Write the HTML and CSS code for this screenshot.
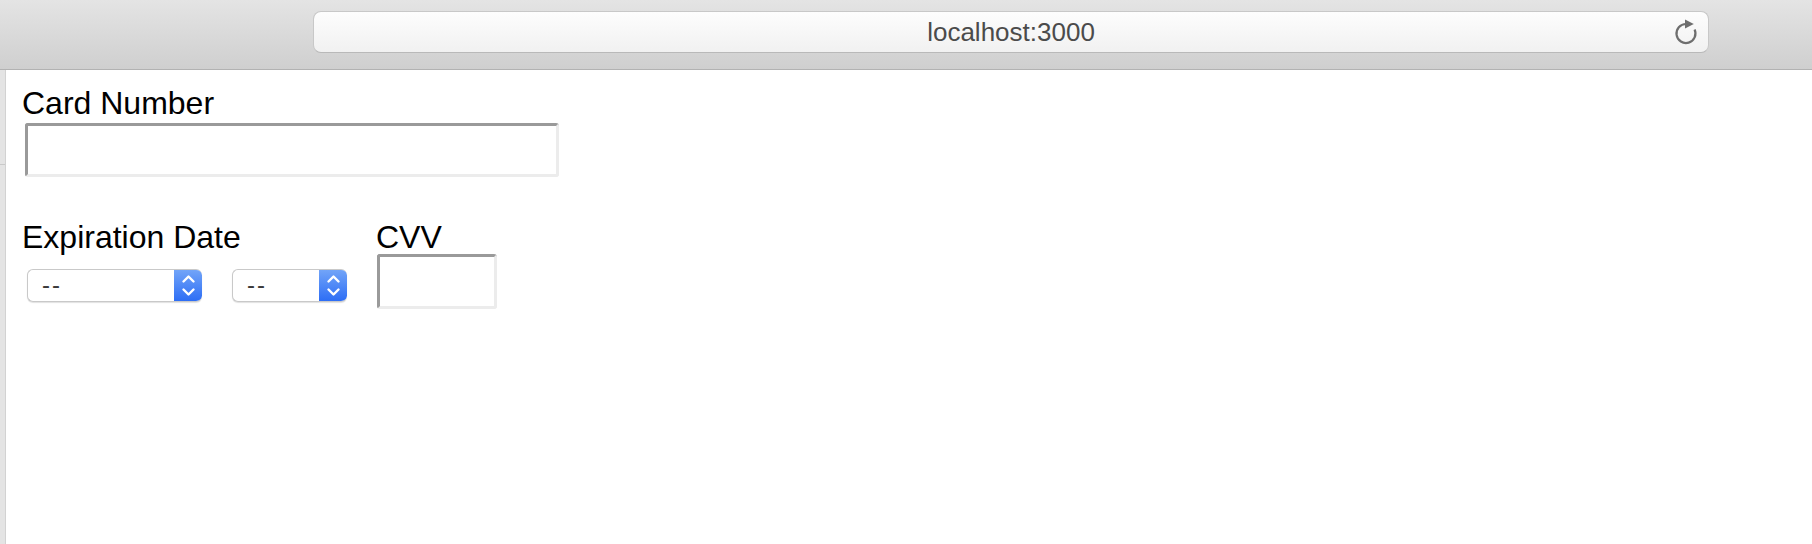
FILE: index.html
```html
<!DOCTYPE html>
<html>
<head>
<meta charset="utf-8">
<title>localhost:3000</title>
<link rel="stylesheet" href="styles.css">
</head>
<body>
<div class="window">
  <div class="toolbar">
    <div class="address">
      <span class="url">localhost:3000</span>
      <svg class="reload" width="28" height="28" viewBox="0 0 28 28">
        <path d="M13 5 A9.5 9.5 0 1 0 21.6 10.5" fill="none" stroke="#6e6e6e" stroke-width="2.2"/>
        <path d="M12 0.5 L20.8 5 L12 9.5 Z" fill="#6e6e6e"/>
      </svg>
    </div>
  </div>
  <div class="main">
    <div class="sidebar"><div class="sidebar-line"></div></div>
    <form class="content">
      <label class="label">Card Number</label>
      <input class="field field-card" type="text">
      <div class="row">
        <div class="group group-exp">
          <label class="label">Expiration Date</label>
          <div class="selects">
            <div class="select select-month">
              <span class="select-text">--</span>
              <div class="select-arrows">
                <svg width="28" height="33" viewBox="0 0 28 33">
                  <path d="M9.5 12.5 L14.5 7.5 L19.5 12.5" fill="none" stroke="#fff" stroke-width="2.4" stroke-linecap="round" stroke-linejoin="round"/>
                  <path d="M9.5 20.5 L14.5 25.5 L19.5 20.5" fill="none" stroke="#fff" stroke-width="2.4" stroke-linecap="round" stroke-linejoin="round"/>
                </svg>
              </div>
            </div>
            <div class="select select-year">
              <span class="select-text">--</span>
              <div class="select-arrows">
                <svg width="28" height="33" viewBox="0 0 28 33">
                  <path d="M9.5 12.5 L14.5 7.5 L19.5 12.5" fill="none" stroke="#fff" stroke-width="2.4" stroke-linecap="round" stroke-linejoin="round"/>
                  <path d="M9.5 20.5 L14.5 25.5 L19.5 20.5" fill="none" stroke="#fff" stroke-width="2.4" stroke-linecap="round" stroke-linejoin="round"/>
                </svg>
              </div>
            </div>
          </div>
        </div>
        <div class="group group-cvv">
          <label class="label">CVV</label>
          <input class="field field-cvv" type="text">
        </div>
      </div>
    </form>
  </div>
</div>
</body>
</html>
```
FILE: styles.css
```css
html, body {
  margin: 0;
  padding: 0;
  background: #ffffff;
}

.window {
  width: 1812px;
  height: 544px;
  display: flex;
  flex-direction: column;
  overflow: hidden;
}

.toolbar {
  height: 58px;
  flex: none;
  background: linear-gradient(#e4e4e4, #cfcfcf);
  border-bottom: 1px solid #b2b2b2;
  padding-top: 11px;
  padding-left: 313px;
  box-sizing: content-box;
}

.address {
  width: 1396px;
  height: 42px;
  box-sizing: border-box;
  border: 1px solid #c8c8c8;
  border-bottom-color: #b9b9b9;
  border-radius: 8px;
  background: linear-gradient(#fdfdfd, #f1f1f1);
  display: flex;
  align-items: center;
  justify-content: center;
  position: relative;
}

.url {
  font-family: "Liberation Sans", Arial, sans-serif;
  font-size: 26px;
  color: #4b4b4b;
  margin-top: 1px;
}

.reload {
  position: absolute;
  right: 7px;
  top: 7px;
}

.main {
  flex: 1;
  display: flex;
}

.sidebar {
  width: 5px;
  flex: none;
  background: #e4e4e4;
  border-right: 1px solid #d2d2d2;
  padding-top: 94px;
}

.sidebar-line {
  height: 1px;
  background: #c9c9c9;
}

.content {
  flex: 1;
  padding: 15px 0 0 16px;
  font-family: "Liberation Sans", Arial, Helvetica, sans-serif;
  color: #000;
}

.label {
  display: block;
  font-size: 32px;
  line-height: 36px;
}

.field {
  display: block;
  box-sizing: border-box;
  margin: 0;
  padding: 0;
  background: #fff;
  border-style: solid;
  border-width: 3px;
  border-color: #9a9a9a #ececec #ececec #9a9a9a;
  border-radius: 3px;
  outline: none;
}

.field-card {
  width: 534px;
  height: 54px;
  margin-top: 2px;
  margin-left: 3px;
}

.row {
  display: flex;
  gap: 29px;
  margin-top: 42px;
  align-items: flex-start;
}

.selects {
  display: flex;
  gap: 30px;
  margin-top: 14px;
  margin-left: 5px;
}

.select {
  height: 33px;
  box-sizing: border-box;
  display: flex;
  align-items: center;
  justify-content: space-between;
  background: #fff;
  border: 1px solid #c9c9c9;
  border-right: none;
  border-radius: 6px;
  box-shadow: 0 1px 1px rgba(0, 0, 0, 0.12);
  overflow: hidden;
}

.select-month {
  width: 175px;
}

.select-year {
  width: 115px;
}

.select-text {
  font-family: "Liberation Sans", Arial, sans-serif;
  font-size: 24px;
  letter-spacing: 2px;
  color: #3a3a3a;
  padding-left: 14px;
  margin-top: -2px;
}

.select-arrows {
  width: 28px;
  height: 33px;
  margin-top: -1px;
  margin-bottom: -1px;
  background: linear-gradient(#74a6f8, #2b6cf5);
  border-radius: 0 6px 6px 0;
  display: flex;
}

.field-cvv {
  width: 120px;
  height: 55px;
  margin-top: -1px;
  margin-left: 1px;
}
```
